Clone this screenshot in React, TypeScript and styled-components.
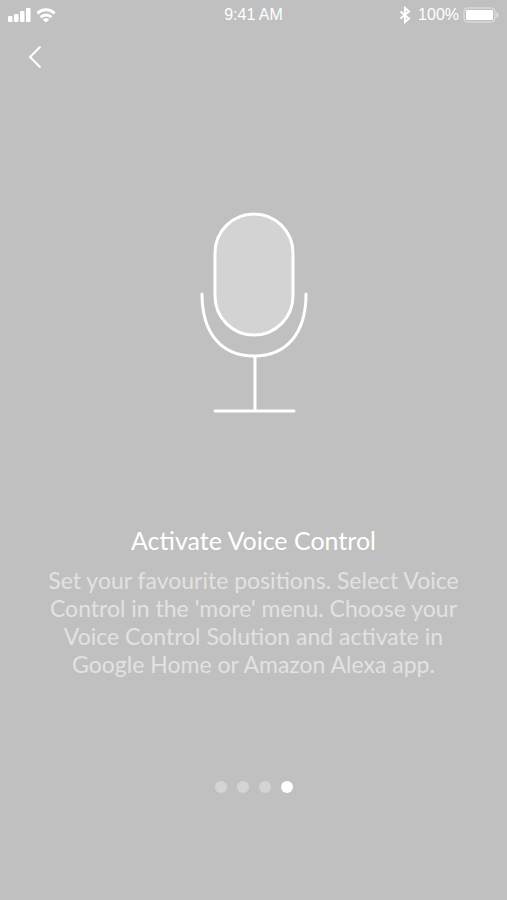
import React from "react";
import styled, { createGlobalStyle } from "styled-components";

const GlobalStyle = createGlobalStyle`
  *, *::before, *::after { box-sizing: border-box; }
  body { margin: 0; background: #c0c0c0; }
`;

const Screen = styled.div`
  display: flex;
  flex-direction: column;
  min-height: 100vh;
  background: #c0c0c0;
  color: #fff;
  font-family: Lato, sans-serif;
`;

const StatusBar = styled.header`
  display: grid;
  grid-template-columns: 1fr auto 1fr;
  align-items: center;
  height: 30px;
  padding: 0 8px;
  font: 16px/20px "Liberation Sans", Arial, sans-serif;
`;

const StatusGroup = styled.div<{ $end?: boolean }>`
  display: flex;
  align-items: center;
  justify-content: ${(p) => (p.$end ? "flex-end" : "flex-start")};
  gap: ${(p) => (p.$end ? "4px" : "5px")};
`;

const BluetoothIcon = styled.svg`
  margin-right: 3px;
`;

const Nav = styled.nav`
  display: flex;
  padding: 4px 15px;
`;

const BackButton = styled.button`
  display: flex;
  align-items: center;
  justify-content: center;
  width: 40px;
  height: 46px;
  padding: 0;
  border: 0;
  background: none;
  color: inherit;
  cursor: pointer;
`;

const Content = styled.main`
  display: flex;
  flex: 1;
  flex-direction: column;
  align-items: center;
  padding: 128px 40px 107px;
  text-align: center;
`;

const Title = styled.h1`
  margin: 110px 0 0;
  font-size: 25px;
  font-weight: 400;
  line-height: 32px;
`;

const Description = styled.p`
  max-width: 416px;
  margin: 10px 0 0;
  color: #e2e2e2;
  font-size: 23px;
  line-height: 28px;
`;

const Dots = styled.div`
  display: flex;
  gap: 10px;
  margin-top: auto;
`;

const Dot = styled.button<{ $active: boolean }>`
  width: 12px;
  height: 12px;
  padding: 0;
  border: 0;
  border-radius: 50%;
  background: ${(p) => (p.$active ? "#fff" : "#d4d4d4")};
  cursor: pointer;
`;

const pages = [1, 2, 3, 4];

export default function App() {
  const [page, setPage] = React.useState(4);
  return (
    <Screen>
      <GlobalStyle />
      <StatusBar>
        <StatusGroup>
          <svg width="23" height="14" viewBox="0 0 23 14" fill="#fff" aria-hidden="true">
            <rect x="0" y="8" width="4.500" height="6" rx="1" />
            <rect x="6" y="6" width="4.500" height="8" rx="1" />
            <rect x="12" y="3" width="4.500" height="11" rx="1" />
            <rect x="18" y="0" width="4.500" height="14" rx="1" />
          </svg>
          <svg width="20" height="15" viewBox="0 0 20 15" fill="none" stroke="#fff" strokeWidth="3" aria-hidden="true">
            <path d="M1.500 5.400a12 12 0 0 1 17 0M4.600 9.200a7.700 7.700 0 0 1 10.800 0" />
            <path d="M10 14.500 6.800 11.500a4.600 4.600 0 0 1 6.400 0Z" fill="#fff" stroke="none" />
          </svg>
        </StatusGroup>
        <span>9:41 AM</span>
        <StatusGroup $end>
          <BluetoothIcon width="12" height="18" viewBox="0 0 12 18" fill="none" stroke="#fff" strokeWidth="2" aria-hidden="true">
            <path d="M1.500 5.500 10 12.500 6 16V2l4 3.500-8.500 7" />
          </BluetoothIcon>
          <span>100%</span>
          <svg width="36" height="16" viewBox="0 0 36 16" fill="#fff" aria-hidden="true">
            <rect x="1" y="1" width="31" height="14" rx="3.500" fill="none" stroke="#e4e4e4" />
            <rect x="3" y="3" width="27" height="10" rx="1" />
            <path d="M33.500 5c2.400 1 2.400 5 0 6Z" fill="#e4e4e4" />
          </svg>
        </StatusGroup>
      </StatusBar>
      <Nav>
        <BackButton type="button" aria-label="Back">
          <svg width="14" height="24" viewBox="0 0 14 24" fill="none" stroke="#fff" strokeWidth="2">
            <path d="M12.500 1.500 2 12l10.500 10.500" />
          </svg>
        </BackButton>
      </Nav>
      <Content>
        <svg width="108" height="202" viewBox="0 0 108 202" fill="none" stroke="#fff" strokeWidth="3" strokeLinecap="round" aria-hidden="true">
          <rect x="15" y="2" width="78" height="121" rx="39" fill="#d3d3d3" />
          <path d="M2 82C2 122 22 144 54 144s52-22 52-62M55 144v55M15 199h79" />
        </svg>
        <Title>Activate Voice Control</Title>
        <Description>
          Set your favourite positions. Select Voice Control in the 'more' menu. Choose your Voice Control Solution
          and activate in Google Home or Amazon Alexa app.
        </Description>
        <Dots>
          {pages.map((n) => (
            <Dot key={n} type="button" $active={n === page} aria-label={`Page ${n}`} onClick={() => setPage(n)} />
          ))}
        </Dots>
      </Content>
    </Screen>
  );
}
